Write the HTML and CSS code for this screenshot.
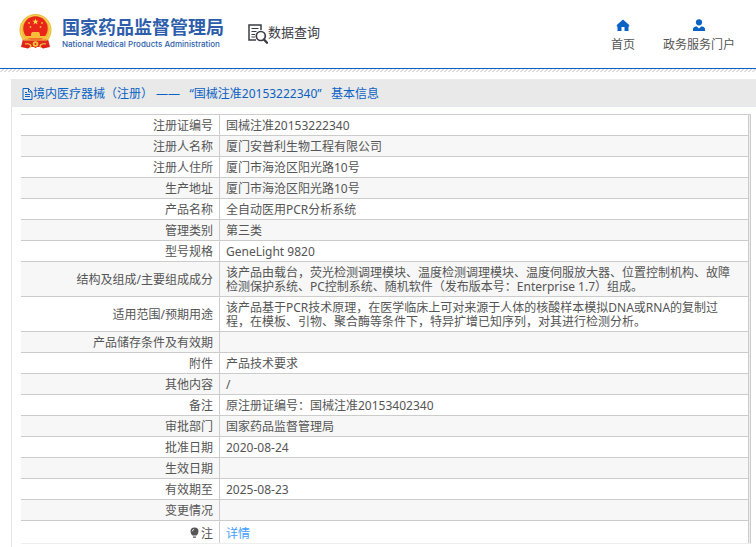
FILE: index.html
```html
<!DOCTYPE html>
<html lang="zh-CN">
<head>
    <meta charset="UTF-8">
    <meta name="viewport" content="width=device-width, initial-scale=1.0">
    <title>国家药品监督管理局 数据查询</title>
    <link rel="stylesheet" href="styles.css">
</head>
<body>
    <header class="header">
        <a class="logo" href="#">
            <svg class="emblem" viewBox="0 0 33 35" aria-hidden="true">
                <path d="M4 25 L2 33 L9 34.500 L13 32 L16.500 34 L20 32 L24 34.500 L31 33 L29 25z" fill="#dd2018"/>
                <circle cx="16.500" cy="16" r="16" fill="#edbb38"/>
                <circle cx="16.500" cy="16" r="14.500" fill="none" stroke="#f8d45c" stroke-width="1"/>
                <circle cx="16.500" cy="14.500" r="12.200" fill="#e92418"/>
                <path d="M16.500 4.500l.8 2.200h2.400l-1.900 1.400.7 2.300-2-1.400-2 1.400.7-2.300-1.900-1.400h2.400z" fill="#ffd84a"/>
                <g fill="#f9bd3a">
                    <circle cx="10" cy="9" r=".9"/>
                    <circle cx="23" cy="9" r=".9"/>
                    <circle cx="11.500" cy="13" r=".9"/>
                    <circle cx="21.500" cy="13" r=".9"/>
                    <path d="M12 20l1-2h7l1 2v2h6v2.500H6V22h6z"/>
                </g>
                <path d="M5 25.500h23l2 5q-5-1-8 2.500H11q-3-3.500-8-2.500z" fill="#e22a1a"/>
                <path d="M5 26h23M6 30q5-1 6 2l-1 2M27 30q-5-1-6 2l1 2" fill="none" stroke="#f6ce4e" stroke-width="1.200"/>
                <circle cx="16.500" cy="30" r="2.800" fill="#f3c241"/>
                <circle cx="16.500" cy="30" r="1" fill="#e22a1a"/>
            </svg>
            <span class="logo-text">
                <span class="logo-cn">国家药品监督管理局</span>
                <span class="logo-en">National Medical Products Administration</span>
            </span>
        </a>
        <a class="query" href="#">
            <svg class="query-icon" viewBox="0 0 20 20" aria-hidden="true">
                <path d="M8 16H1V1h12v5" fill="none" stroke="#3c3c46" stroke-width="1.500"/>
                <path d="M3.500 4.500h7M3.500 7.500h5M3.500 10.500h3.500M3.500 13h3.500" fill="none" stroke="#3c3c46" stroke-width="1.200"/>
                <circle cx="12.800" cy="12" r="4.500" fill="#fff" stroke="#3c3c46" stroke-width="1.700"/>
                <path d="M16 15.500l3 3.200" stroke="#3c3c46" stroke-width="2.400" stroke-linecap="round"/>
            </svg>
            <span>数据查询</span>
        </a>
        <nav class="nav">
            <a href="#">
                <svg class="nav-icon" viewBox="0 0 14 13" aria-hidden="true">
                    <path d="M7 .5L.8 6v1.500H1.500V12h4V8h3v4h4V7.500h.7V6z" fill="#0a62c4"/>
                </svg>
                <span>首页</span>
            </a>
            <a href="#">
                <svg class="nav-icon" viewBox="0 0 14 13" aria-hidden="true">
                    <circle cx="7" cy="3.300" r="3.100" fill="#0a62c4"/>
                    <path d="M1 12V9.500Q1.500 7.500 4.500 7.200L7 9.500l2.500-2.300Q12.500 7.500 13 9.500V12z" fill="#0a62c4"/>
                </svg>
                <span>政务服务门户</span>
            </a>
        </nav>
    </header>
    <div class="strip"></div>
    <main class="panel">
        <h1 class="title">
            <svg class="doc-icon" viewBox="0 0 11 12" aria-hidden="true">
                <path d="M1 .5h5.500L10 4v7.500H1zM6.500.5V4H10M3 4.500h2M3 6.500h5M3 8.500h5" fill="none" stroke="#0a62c4"/>
            </svg>
            <span>境内医疗器械（注册） ——&nbsp;&nbsp; “国械注准20153222340”&nbsp;&nbsp; 基本信息</span>
        </h1>
        <div class="table-wrap">
            <table class="info">
                <tr><th scope="row">注册证编号</th><td>国械注准20153222340</td></tr>
                <tr><th scope="row">注册人名称</th><td>厦门安普利生物工程有限公司</td></tr>
                <tr><th scope="row">注册人住所</th><td>厦门市海沧区阳光路10号</td></tr>
                <tr><th scope="row">生产地址</th><td>厦门市海沧区阳光路10号</td></tr>
                <tr><th scope="row">产品名称</th><td>全自动医用PCR分析系统</td></tr>
                <tr><th scope="row">管理类别</th><td>第三类</td></tr>
                <tr><th scope="row">型号规格</th><td>GeneLight 9820</td></tr>
                <tr><th scope="row">结构及组成/主要组成成分</th><td>该产品由载台，荧光检测调理模块、温度检测调理模块、温度伺服放大器、位置控制机构、故障检测保护系统、PC控制系统、随机软件（发布版本号：Enterprise 1.7）组成。</td></tr>
                <tr><th scope="row">适用范围/预期用途</th><td>该产品基于PCR技术原理，在医学临床上可对来源于人体的核酸样本模拟DNA或RNA的复制过程，在模板、引物、聚合酶等条件下，特异扩增已知序列，对其进行检测分析。</td></tr>
                <tr><th scope="row">产品储存条件及有效期</th><td></td></tr>
                <tr><th scope="row">附件</th><td>产品技术要求</td></tr>
                <tr><th scope="row">其他内容</th><td>/</td></tr>
                <tr><th scope="row">备注</th><td>原注册证编号：国械注准20153402340</td></tr>
                <tr><th scope="row">审批部门</th><td>国家药品监督管理局</td></tr>
                <tr><th scope="row">批准日期</th><td>2020-08-24</td></tr>
                <tr><th scope="row">生效日期</th><td></td></tr>
                <tr><th scope="row">有效期至</th><td>2025-08-23</td></tr>
                <tr><th scope="row">变更情况</th><td></td></tr>
                <tr class="note">
                    <th scope="row">
                        <svg class="bulb" viewBox="0 0 9 12" aria-hidden="true">
                            <path d="M4.500.5a4 4 0 0 1 4 4Q8.500 6.500 6.500 8.500h-4Q.5 6.500.5 4.500a4 4 0 0 1 4-4zM3 9.500h3v1.200H3z" fill="#555"/>
                            <path d="M2.300 4.300q.2-1.700 1.900-2" fill="none" stroke="#fff" stroke-width=".8"/>
                        </svg>注</th>
                    <td><a href="#">详情</a></td>
                </tr>
            </table>
        </div>
    </main>
</body>
</html>
```
FILE: styles.css
```css
* {
    box-sizing: border-box;
}
body {
    display: flex;
    flex-direction: column;
    min-height: 100vh;
    margin: 0;
    background: #fff;
    color: #555;
    font-family: "Noto Sans", "Noto Sans CJK SC", sans-serif;
    font-size: 12px;
    line-height: 14px;
}
a {
    color: inherit;
    text-decoration: none;
}
svg {
    display: block;
    flex: none;
}
.header {
    display: flex;
    align-items: flex-start;
    height: 69px;
    padding: 14px 21px 0 19px;
    border-bottom: 1px solid #0a62c4;
}
.logo {
    display: flex;
    gap: 10px;
    color: #2d5dab;
}
.emblem {
    width: 33px;
    height: 35px;
}
.logo-text {
    display: flex;
    flex-direction: column;
    padding-top: 3px;
}
.logo-cn {
    font-size: 18px;
    font-weight: bold;
    line-height: 20px;
}
.logo-en {
    font-family: Inter, sans-serif;
    font-size: 8px;
    font-weight: 500;
    line-height: 14px;
}
.query {
    display: flex;
    align-items: flex-start;
    margin: 10px 0 0 24px;
    color: #3c3c46;
    font-size: 13px;
    line-height: 16px;
}
.query-icon {
    width: 20px;
    height: 20px;
}
.nav {
    display: flex;
    gap: 28px;
    margin-left: auto;
    padding-top: 5px;
}
.nav a {
    display: flex;
    flex-direction: column;
    align-items: center;
    gap: 6px;
}
.nav-icon {
    width: 14px;
    height: 13px;
}
/* thin hatched shadow under the header */
.strip {
    height: 3px;
    background: linear-gradient(135deg, #fff 35%, #ddd 35% 60%, #fff 60%) 0 0 / 4px 3px;
}
.panel {
    flex: 1;
    margin: 7px 0 0 11px;
    border-left: 1px solid #e4e4e8;
}
.title {
    display: flex;
    align-items: center;
    height: 28px;
    margin: 0 0 7px -1px;
    padding: 2px 0 0 11px;
    background: #e9e9e9;
    border-bottom: 1px solid #e4e8f2;
    color: #0a62c4;
    font-size: 12px;
    font-weight: normal;
}
.doc-icon {
    width: 11px;
    height: 12px;
}
.table-wrap {
    margin: 0 5px 0 9px;
    padding-right: 1px;
    background: #eee;
    border: 1px solid #ccc;
    border-left: 0;
    border-bottom-color: #eee;
}
.info {
    width: 100%;
    background: #fff;
    border-spacing: 0;
}
.info tr:nth-child(even) {
    background: #f7f7f7;
}
.info th,
.info td {
    height: 21px;
    padding: 4px 6px 2px;
    border-right: 1px solid #ccc;
    border-bottom: 1px solid #ccc;
}
.info th {
    width: 199px;
    font-weight: normal;
    text-align: right;
}
.info td {
    padding-right: 12px;
}
.info .note th,
.info .note td {
    height: 22px;
    padding-top: 6px;
    border-bottom: 0;
}
.note a {
    color: #409eff;
}
.bulb {
    display: inline-block;
    width: 9px;
    height: 12px;
    margin-right: 2px;
    vertical-align: -1px;
}
```
